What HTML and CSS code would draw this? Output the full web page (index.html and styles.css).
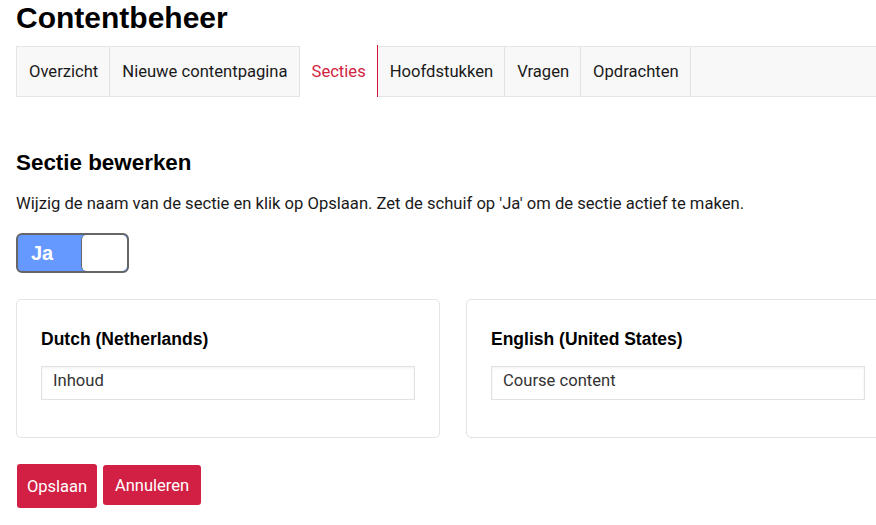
FILE: index.html
```html
<!DOCTYPE html>
<html lang="nl">
<head>
<meta charset="utf-8">
<title>Contentbeheer</title>
<link rel="stylesheet" href="styles.css">
</head>
<body>
<div class="page">
  <h1 class="title">Contentbeheer</h1>
  <ul class="tabs">
    <li class="tab">Overzicht</li>
    <li class="tab">Nieuwe contentpagina</li>
    <li class="tab active">Secties</li>
    <li class="tab">Hoofdstukken</li>
    <li class="tab">Vragen</li>
    <li class="tab">Opdrachten</li>
  </ul>

  <h2 class="section-title">Sectie bewerken</h2>
  <p class="intro">Wijzig de naam van de sectie en klik op Opslaan. Zet de schuif op 'Ja' om de sectie actief te maken.</p>

  <div class="toggle">
    <span class="toggle-on">Ja</span>
    <span class="toggle-knob"></span>
  </div>

  <div class="cards">
    <div class="card">
      <label class="card-label">Dutch (Netherlands)</label>
      <div class="input">Inhoud</div>
    </div>
    <div class="card">
      <label class="card-label">English (United States)</label>
      <div class="input">Course content</div>
    </div>
  </div>

  <div class="actions">
    <button class="btn btn-save">Opslaan</button>
    <a class="btn btn-cancel">Annuleren</a>
  </div>
</div>
</body>
</html>
```

FILE: styles.css
```css
html, body {
  margin: 0;
  padding: 0;
  background: #fff;
  overflow: hidden;
}

body {
  font-family: Roboto, "Liberation Sans", sans-serif;
  font-size: 16.6px;
  color: #1a1a1a;
}

.page {
  width: 874px;
  padding: 0 16px;
}

.title {
  font-family: "Liberation Sans", Arial, sans-serif;
  font-weight: bold;
  font-size: 30px;
  line-height: 36px;
  margin: 0;
  color: #000;
}

.tabs {
  list-style: none;
  margin: 10px 0 0;
  padding: 0;
  display: flex;
  height: 49px;
  border: 1px solid #e5e5e5;
  background: #f8f8f8;
}

.tab {
  display: flex;
  align-items: center;
  padding: 0 11px 1px 12px;
  border-right: 1px solid #e3e3e3;
  color: #1a1a1a;
}

.tab.active {
  background: #fff;
  color: #d2233f;
  border-right: 1px solid #d2143c;
  margin-top: -2px;
  margin-bottom: -1px;
  padding-top: 2px;
}

.section-title {
  font-family: "Liberation Sans", Arial, sans-serif;
  font-weight: bold;
  font-size: 22.4px;
  line-height: 26px;
  margin: 53px 0 0;
  color: #000;
}

.intro {
  margin: 16px 0 0;
  line-height: 24px;
}

.toggle {
  margin-top: 17px;
  width: 109px;
  height: 36px;
  border: 2px solid #666;
  border-radius: 6px;
  background: #6699ff;
  display: flex;
  overflow: hidden;
}

.toggle-on {
  flex: 1;
  display: flex;
  align-items: center;
  padding-left: 13px;
  font-family: "Liberation Sans", Arial, sans-serif;
  font-weight: bold;
  font-size: 20px;
  color: #fff;
}

.toggle-knob {
  width: 45px;
  background: #fff;
  border-left: 1px solid #666;
  border-radius: 5px;
}

.cards {
  margin-top: 26px;
  display: grid;
  grid-template-columns: 1fr 1fr;
  gap: 26px;
}

.card {
  border: 1px solid #e3e3e3;
  border-radius: 5px;
  padding: 29px 24px 37px;
  display: flex;
  flex-direction: column;
  gap: 17px;
}

.card-label {
  font-family: "Liberation Sans", Arial, sans-serif;
  font-weight: bold;
  font-size: 17.5px;
  line-height: 20px;
  color: #000;
}

.input {
  height: 32px;
  border: 1px solid #e2e2e2;
  box-shadow: inset 0 1px 3px rgba(0, 0, 0, 0.06);
  padding: 0 11px;
  line-height: 28px;
  color: #333;
}

.actions {
  margin-top: 26px;
  display: flex;
  align-items: flex-start;
  gap: 6px;
}

.btn {
  font-family: inherit;
  font-size: 16.5px;
  color: #fff;
  background: #d21f44;
  border: none;
  border-radius: 3px;
  display: flex;
  align-items: center;
  justify-content: center;
  cursor: pointer;
}

.btn-save {
  width: 80px;
  height: 44px;
  padding: 0;
  margin-left: 1px;
}

.btn-cancel {
  width: 98px;
  height: 40px;
  margin-top: 1px;
}
```
